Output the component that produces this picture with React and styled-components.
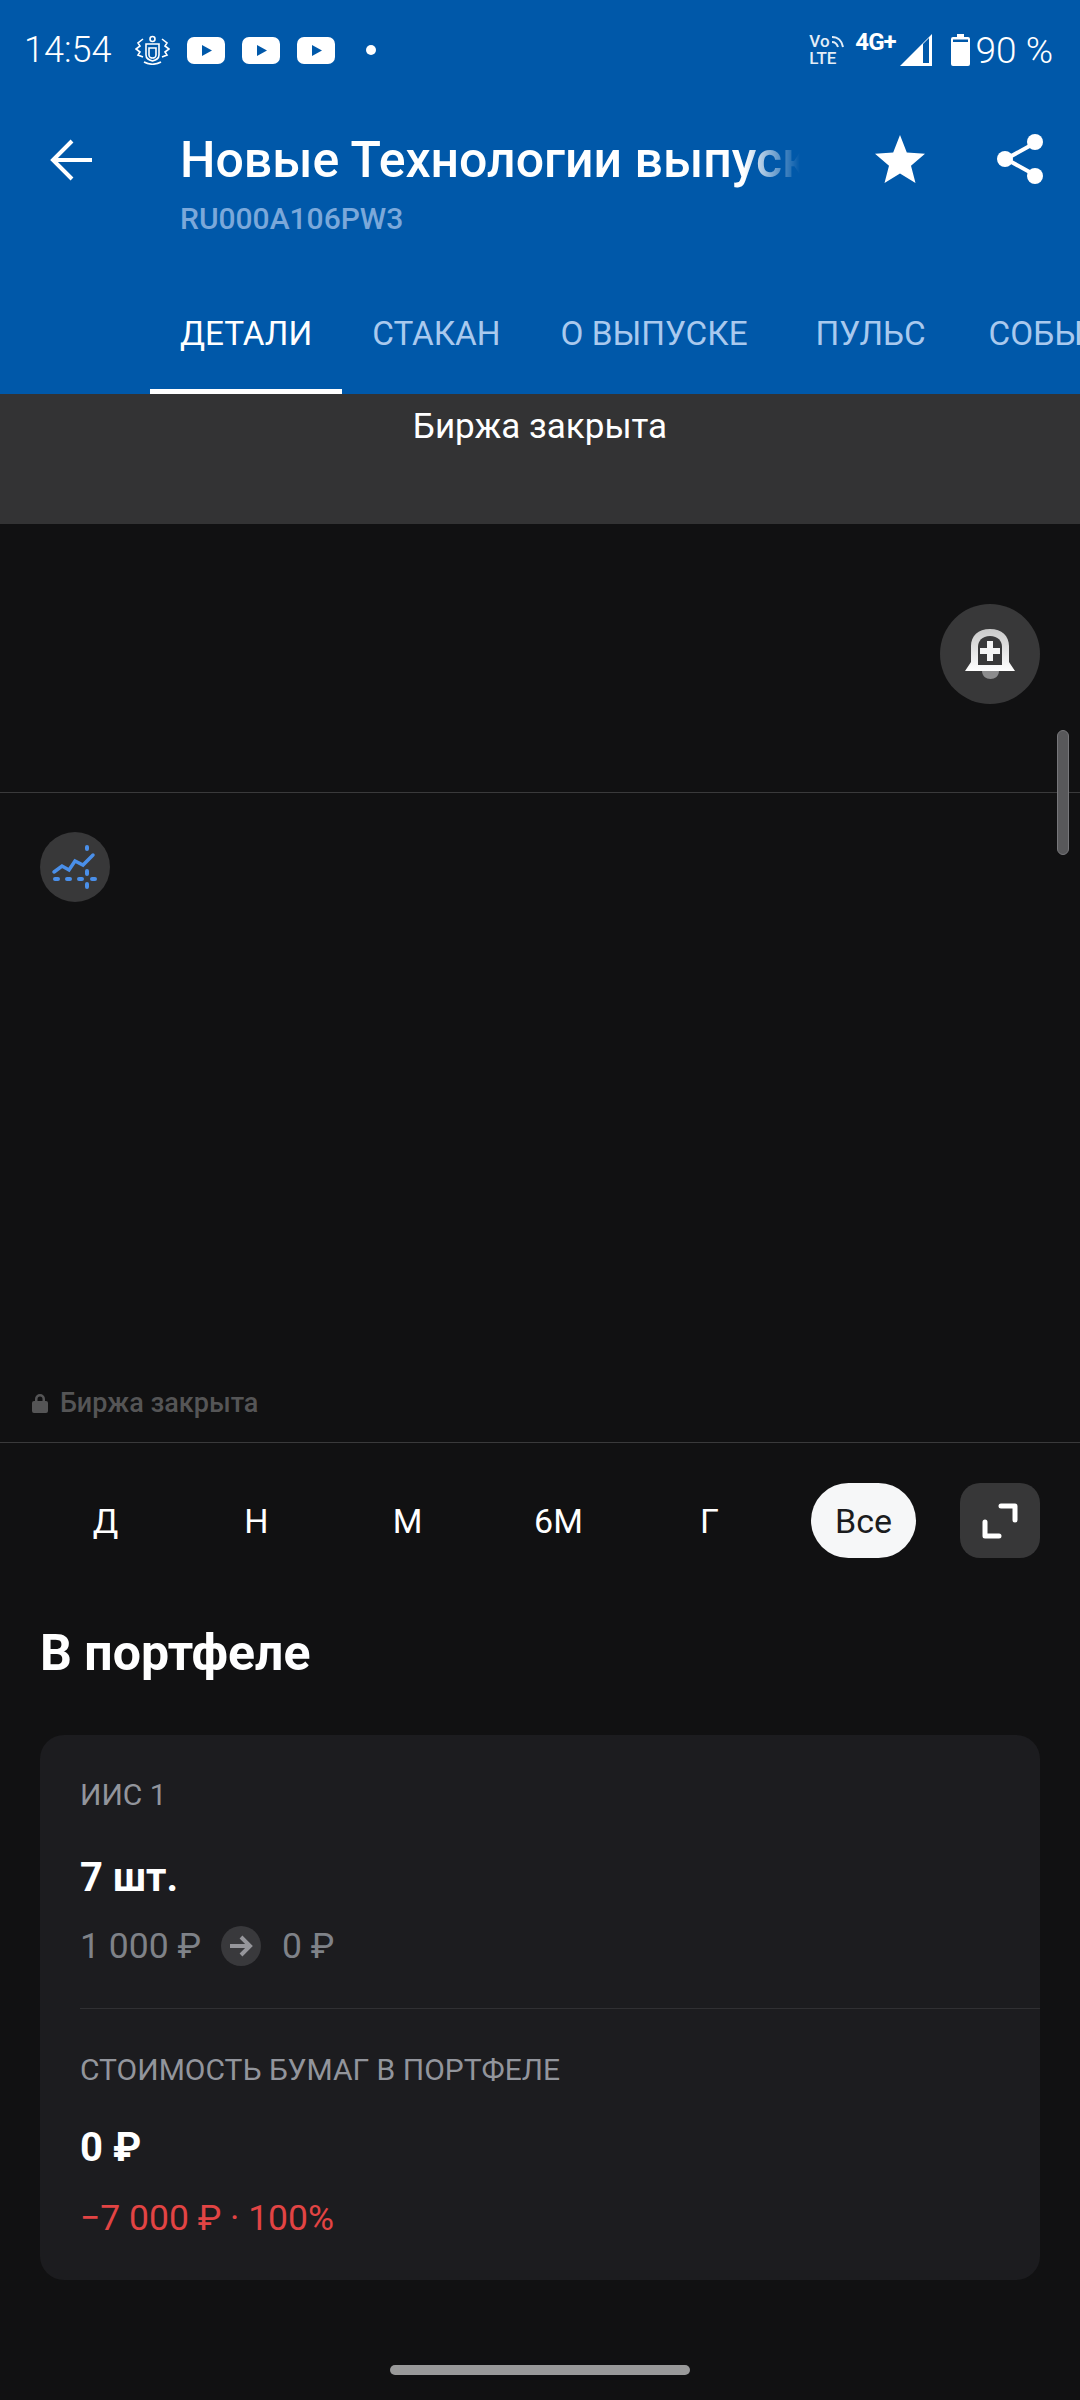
import React from "react";
import styled, { createGlobalStyle } from "styled-components";

const GlobalStyle = createGlobalStyle`
  html, body {
    margin: 0;
    padding: 0;
    background: #111112;
  }
  * {
    box-sizing: border-box;
  }
`;

const Screen = styled.div`
  position: relative;
  width: 1080px;
  height: 2400px;
  overflow: hidden;
  background: #111112;
  color: #fff;
  font-family: Roboto, "Noto Sans", sans-serif;
`;

const Header = styled.header`
  height: 394px;
  background: #0058a9;
`;

const StatusBar = styled.div`
  display: flex;
  align-items: center;
  height: 100px;
  padding: 0 27px 0 24px;
`;

const StatusTime = styled.span`
  font-size: 36px;
  font-weight: 300;
  width: 111px;
`;

const StatusLeft = styled.div`
  display: flex;
  align-items: center;
  flex: 1;
  gap: 17px;
`;

const StatusRight = styled.div`
  display: flex;
  align-items: center;
`;

const VoLte = styled.div`
  display: flex;
  flex-direction: column;
  width: 35px;
  margin-right: 11px;
  font-size: 17px;
  font-weight: 500;
  line-height: 17px;
  color: #e3edf7;
`;

const VoLine = styled.span`
  display: flex;
  align-items: center;
  gap: 1px;
`;

const Network = styled.span`
  margin: -16px 4px 0 0;
  font-size: 24px;
  font-weight: 700;
  letter-spacing: -1px;
`;

const Percent = styled.span`
  margin-left: 6px;
  font-size: 37px;
  font-weight: 300;
`;

const TitleRow = styled.div`
  display: flex;
  align-items: flex-start;
  height: 174px;
  padding: 30px 35px 0 50px;
`;

const BackIcon = styled.svg`
  flex: none;
  width: 42px;
  height: 42px;
  margin: 9px 88px 0 0;
`;

const TitleBlock = styled.div`
  width: 620px;
`;

const Title = styled.div`
  height: 60px;
  overflow: hidden;
  white-space: nowrap;
  font-size: 50px;
  font-weight: 500;
  line-height: 60px;
  mask-image: linear-gradient(90deg, #000 91%, transparent 100%);
`;

const Isin = styled.div`
  margin-top: 9px;
  font-size: 30px;
  font-weight: 500;
  line-height: 40px;
  color: #7ba8da;
`;

const TitleActions = styled.div`
  display: flex;
  align-items: center;
  gap: 72px;
  margin-left: auto;
  margin-top: 4px;
`;

const Tabs = styled.nav`
  display: flex;
  height: 120px;
  padding-left: 150px;
  overflow: hidden;
`;

const Tab = styled.div`
  flex: none;
  display: flex;
  align-items: center;
  height: 120px;
  padding: 3px ${(p) => p.$right || 30}px 0 30px;
  font-size: 33.300px;
  white-space: nowrap;
  color: ${(p) => (p.$active ? "#fff" : "#a9c9ee")};
  border-bottom: 5px solid ${(p) => (p.$active ? "#fff" : "transparent")};
`;

const ClosedBanner = styled.div`
  height: 130px;
  padding-top: 11px;
  background: #333334;
  font-size: 35px;
  line-height: 44px;
  text-align: center;
`;

const AlertArea = styled.div`
  display: flex;
  justify-content: flex-end;
  height: 269px;
  padding: 80px 40px 0 0;
  border-bottom: 1px solid #3a3a3b;
`;

const RoundButton = styled.div`
  display: flex;
  align-items: center;
  justify-content: center;
  width: ${(p) => p.$size}px;
  height: ${(p) => p.$size}px;
  border-radius: 50%;
  background: #383839;
`;

const ChartArea = styled.div`
  display: flex;
  flex-direction: column;
  height: 650px;
  padding: 39px 0 0 40px;
  border-bottom: 1px solid #3a3a3b;
`;

const ChartStatus = styled.div`
  display: flex;
  align-items: center;
  gap: 12px;
  margin: auto 0 23px -8px;
  font-size: 27px;
  font-weight: 500;
  line-height: 32px;
  color: #555556;
`;

const ScrollThumb = styled.div`
  position: absolute;
  top: 730px;
  left: 1057px;
  width: 12px;
  height: 125px;
  border: 1px solid #77777a;
  border-radius: 6px;
  background: #58585a;
`;

const RangeRow = styled.div`
  display: flex;
  align-items: center;
  height: 75px;
  margin-top: 40px;
  padding: 0 40px 0 30px;
`;

const RangeItem = styled.div`
  display: flex;
  align-items: center;
  justify-content: center;
  width: 151px;
  height: 75px;
  margin-left: ${(p) => (p.$active ? "3px" : "0")};
  font-size: 34px;
  color: ${(p) => (p.$active ? "#1b1c1e" : "#fff")};
`;

const RangePill = styled.span`
  display: flex;
  align-items: center;
  justify-content: center;
  width: 105px;
  height: 75px;
  border-radius: 38px;
  background: #f6f7f8;
`;

const ExpandButton = styled.div`
  display: flex;
  align-items: center;
  justify-content: center;
  width: 80px;
  height: 75px;
  margin-left: auto;
  border-radius: 20px;
  background: #373738;
`;

const SectionTitle = styled.h2`
  margin: 65px 0 0 40px;
  font-size: 50px;
  font-weight: 700;
  line-height: 60px;
`;

const Card = styled.section`
  width: 1000px;
  height: 545px;
  margin: 52px 0 0 40px;
  padding-left: 40px;
  border-radius: 24px;
  background: #1c1c1f;
`;

const CardBlock = styled.div`
  height: ${(p) => p.$height}px;
  padding-top: ${(p) => p.$top}px;
  border-bottom: ${(p) => (p.$divider ? "1px solid #303033" : "none")};
`;

const Label = styled.div`
  font-size: 30px;
  font-weight: 400;
  line-height: 40px;
  color: #92959c;
`;

const Amount = styled.div`
  margin-top: ${(p) => p.$top}px;
  font-size: 40px;
  font-weight: 700;
  line-height: 50px;
`;

const Sub = styled.div`
  display: flex;
  align-items: center;
  margin-top: ${(p) => p.$top}px;
  font-size: 35.500px;
  line-height: 44px;
  color: ${(p) => p.$color || "#7f8288"};
`;

const ArrowBadge = styled.span`
  display: flex;
  align-items: center;
  justify-content: center;
  width: 40px;
  height: 40px;
  margin: 0 21px 0 20px;
  border-radius: 50%;
  background: #39393c;
`;

const HomeBar = styled.div`
  width: 300px;
  height: 10px;
  margin: 85px auto 0;
  border-radius: 5px;
  background: #999;
`;

const YoutubeIcon = () => (
  <svg width="38" height="27" viewBox="0 0 38 27">
    <rect width="38" height="27" rx="7" fill="#fff" />
    <path d="M15 8l10 5.500L15 19z" fill="#0058a9" />
  </svg>
);

const CrestIcon = () => (
  <svg width="35" height="30" viewBox="0 0 35 30" fill="none" stroke="#fff" strokeWidth="1.600">
    <path d="M11 9h13v11c0 4-3 5-6.500 6C14 25 11 24 11 20z" />
    <circle cx="17.500" cy="4" r="2.500" />
    <path d="M14 13h7v7c0 2-2 3-3.500 3S14 22 14 20z" />
    <path d="M8 4L3 8l2 3-4 3 4 3-2 3 5 2M27 4l5 4-2 3 4 3-4 3 2 3-5 2" />
    <path d="M9 27c5 3 12 3 17 0" />
  </svg>
);

const App = () => {
  return (
    <Screen>
      <GlobalStyle />
      <Header>
        <StatusBar>
          <StatusTime>14:54</StatusTime>
          <StatusLeft>
            <CrestIcon />
            <YoutubeIcon />
            <YoutubeIcon />
            <YoutubeIcon />
            <svg width="10" height="10" viewBox="0 0 10 10" style={{ marginLeft: 14 }}>
              <circle cx="5" cy="5" r="5" fill="#fff" />
            </svg>
          </StatusLeft>
          <StatusRight>
            <VoLte>
              <VoLine>
                Vo
                <svg width="13" height="13" viewBox="0 0 13 13" fill="none" stroke="#e3edf7" strokeWidth="2">
                  <path d="M1 2c6 0 10 4 11 10M1 7c3 0 5 2 6 5" />
                </svg>
              </VoLine>
              <span>LTE</span>
            </VoLte>
            <Network>4G+</Network>
            <svg width="32" height="32" viewBox="0 0 32 32" style={{ marginRight: 19 }}>
              <path d="M32 0v32H0z" fill="#fff" />
              <path d="M23 10l6-6v25h-6z" fill="#0058a9" />
            </svg>
            <svg width="19" height="32" viewBox="0 0 19 32">
              <path d="M6 0h7v3h4a2 2 0 0 1 2 2v25a2 2 0 0 1-2 2H2a2 2 0 0 1-2-2V5a2 2 0 0 1 2-2h4z" fill="#fff" />
              <path d="M2 5.500h15V8H2z" fill="#0058a9" />
            </svg>
            <Percent>90 %</Percent>
          </StatusRight>
        </StatusBar>

        <TitleRow>
          <BackIcon viewBox="0 0 42 42" fill="none" stroke="#fff" strokeWidth="4">
            <path d="M42 21H4M22 2L3 21l19 19" />
          </BackIcon>
          <TitleBlock>
            <Title>Новые Технологии выпуск 3</Title>
            <Isin>RU000A106PW3</Isin>
          </TitleBlock>
          <TitleActions>
            <svg width="50" height="48" viewBox="0 0 50 48">
              <path d="M25 0l6.800 17.600L50 18.800 36 30.800 40.500 48 25 38.400 9.500 48 14 30.800 0 18.800l18.200-1.200z" fill="#fff" />
            </svg>
            <svg width="48" height="50" viewBox="0 0 48 50" fill="none">
              <path d="M38 9L9 25l29 16" stroke="#fff" strokeWidth="4" />
              <circle cx="38" cy="8" r="8" fill="#fff" />
              <circle cx="8" cy="25" r="8" fill="#fff" />
              <circle cx="38" cy="42" r="8" fill="#fff" />
            </svg>
          </TitleActions>
        </TitleRow>

        <Tabs>
          <Tab $active>ДЕТАЛИ</Tab>
          <Tab>СТАКАН</Tab>
          <Tab $right={38}>О ВЫПУСКЕ</Tab>
          <Tab $right={33}>ПУЛЬС</Tab>
          <Tab>СОБЫТИЯ</Tab>
        </Tabs>
      </Header>

      <ClosedBanner>Биржа закрыта</ClosedBanner>

      <AlertArea>
        <RoundButton $size={100}>
          <svg width="50" height="50" viewBox="0 0 50 50">
            <defs>
              <linearGradient id="bellShade" x1="0" y1="0" x2="0" y2="1">
                <stop offset="0" stopColor="#c9c9c9" />
                <stop offset="1" stopColor="#fff" />
              </linearGradient>
            </defs>
            <path d="M25 0C13 0 6 7 6 17v16L0 42h50l-6-9V17C44 7 37 0 25 0z" fill="url(#bellShade)" />
            <path d="M25 7c-8 0-12 5-12 11v18h24V18c0-6-4-11-12-11z" fill="#383839" />
            <path d="M22 12h6v7h7v6h-7v7h-6v-7h-7v-6h7z" fill="#f4f4f4" />
            <path d="M17 42h17c0 5-4 8-8.500 8S17 47 17 42z" fill="#8c8c8d" />
          </svg>
        </RoundButton>
      </AlertArea>

      <ChartArea>
        <RoundButton $size={70}>
          <svg width="70" height="70" viewBox="0 0 70 70" fill="none" stroke="#4a8fe9" strokeLinecap="round">
            <path d="M14 40l8-6 7 4 6-9 8 4 10-10" strokeWidth="3.500" />
            <path d="M15 47h3M27 47h3M39 47h3M52 47h3M47 15v2M47 39v3M47 52v3" strokeWidth="4" />
          </svg>
        </RoundButton>
        <ChartStatus>
          <svg width="16" height="20" viewBox="0 0 16 20">
            <path d="M3 8V6a5 5 0 0 1 10 0v2h1a2 2 0 0 1 2 2v8a2 2 0 0 1-2 2H2a2 2 0 0 1-2-2v-8a2 2 0 0 1 2-2zm2.500 0h5V6a2.500 2.500 0 0 0-5 0z" fill="#555556" fillRule="evenodd" />
          </svg>
          Биржа закрыта
        </ChartStatus>
      </ChartArea>

      <ScrollThumb />

      <RangeRow>
        <RangeItem>Д</RangeItem>
        <RangeItem>Н</RangeItem>
        <RangeItem>М</RangeItem>
        <RangeItem>6М</RangeItem>
        <RangeItem>Г</RangeItem>
        <RangeItem $active>
          <RangePill>Все</RangePill>
        </RangeItem>
        <ExpandButton>
          <svg width="36" height="36" viewBox="0 0 36 36" fill="none" stroke="#fff" strokeWidth="5" strokeLinecap="round" strokeLinejoin="round">
            <path d="M19 3h14v14M3 19v14h14" />
          </svg>
        </ExpandButton>
      </RangeRow>

      <SectionTitle>В портфеле</SectionTitle>

      <Card>
        <CardBlock $height={274} $top={40} $divider>
          <Label>ИИС 1</Label>
          <Amount $top={38}>7 шт.</Amount>
          <Sub $top={21}>
            1 000 ₽
            <ArrowBadge>
              <svg width="24" height="22" viewBox="0 0 24 22" fill="none" stroke="#96969b" strokeWidth="4">
                <path d="M1 11h20M12 2l9 9-9 9" />
              </svg>
            </ArrowBadge>
            0 ₽
          </Sub>
        </CardBlock>
        <CardBlock $height={270} $top={41}>
          <Label>СТОИМОСТЬ БУМАГ В ПОРТФЕЛЕ</Label>
          <Amount $top={33}>0 ₽</Amount>
          <Sub $top={23} $color="#e24444">−7 000 ₽ · 100%</Sub>
        </CardBlock>
      </Card>

      <HomeBar />
    </Screen>
  );
};

export default App;
